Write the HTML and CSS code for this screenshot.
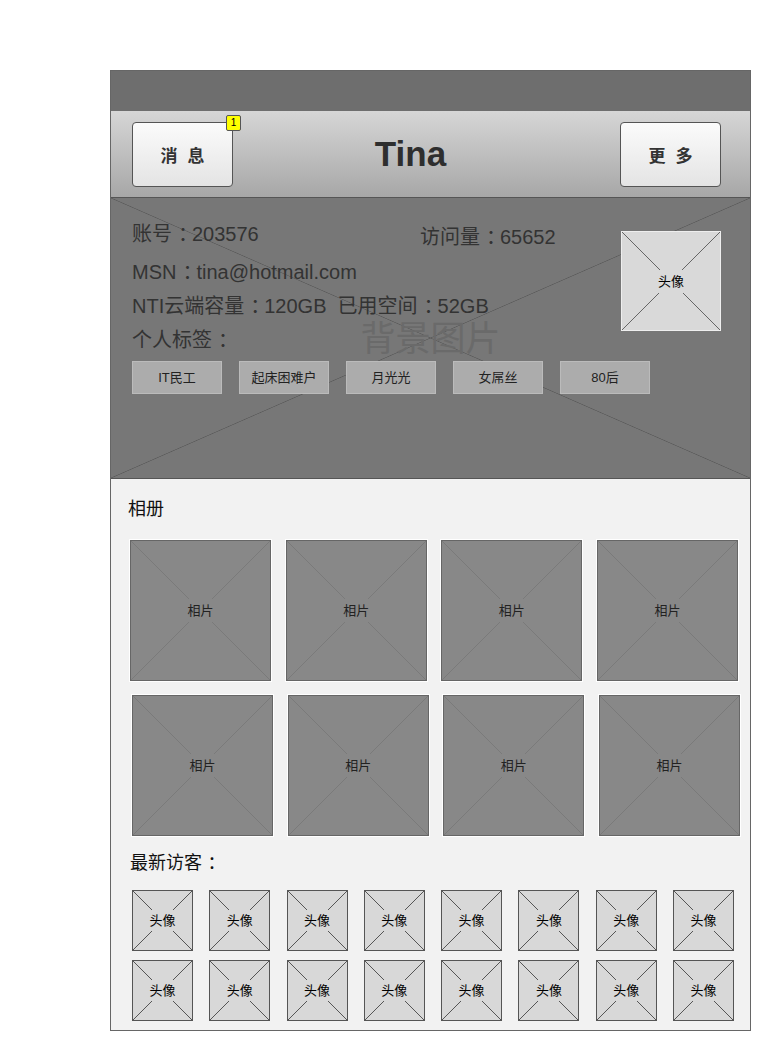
FILE: index.html
```html
<!DOCTYPE html>
<html lang="zh-CN">
<head>
  <meta charset="UTF-8">
  <title>个人主页 - Tina</title>
  <link rel="stylesheet" href="styles.css">
</head>
<body>
  <div class="phone">
    <div class="statusbar"></div>

    <div class="header">
      <button class="hbtn">消息<span class="badge">1</span></button>
      <div class="title">Tina</div>
      <button class="hbtn">更多</button>
    </div>

    <div class="info xbox">
      <div class="watermark">背景图片</div>
      <div class="info-main">
        <div class="info-text">
          <div class="row first">
            <span class="acc">账号<i class="colon">：</i>203576</span>
            <span class="visits">访问量<i class="colon">：</i>65652</span>
          </div>
          <div class="row">MSN<i class="colon">：</i>tina@hotmail.com</div>
          <div class="row">NTI云端容量<i class="colon">：</i>120GB&nbsp; 已用空间<i class="colon">：</i>52GB</div>
          <div class="row">个人标签<i class="colon">：</i></div>
        </div>
        <div class="avatar xbox"><span>头像</span></div>
      </div>
      <div class="tags">
        <span class="tag">IT民工</span>
        <span class="tag">起床困难户</span>
        <span class="tag">月光光</span>
        <span class="tag">女屌丝</span>
        <span class="tag">80后</span>
      </div>
    </div>

    <div class="content">
      <div class="sec-title album-title">相册</div>
      <div class="photos">
        <div class="photo xbox"><span>相片</span></div>
        <div class="photo xbox"><span>相片</span></div>
        <div class="photo xbox"><span>相片</span></div>
        <div class="photo xbox"><span>相片</span></div>
      </div>
      <div class="photos second">
        <div class="photo xbox"><span>相片</span></div>
        <div class="photo xbox"><span>相片</span></div>
        <div class="photo xbox"><span>相片</span></div>
        <div class="photo xbox"><span>相片</span></div>
      </div>

      <div class="sec-title">最新访客<i class="colon">：</i></div>
      <div class="visitors">
        <div class="visitor xbox"><span>头像</span></div>
        <div class="visitor xbox"><span>头像</span></div>
        <div class="visitor xbox"><span>头像</span></div>
        <div class="visitor xbox"><span>头像</span></div>
        <div class="visitor xbox"><span>头像</span></div>
        <div class="visitor xbox"><span>头像</span></div>
        <div class="visitor xbox"><span>头像</span></div>
        <div class="visitor xbox"><span>头像</span></div>
      </div>
      <div class="visitors">
        <div class="visitor xbox"><span>头像</span></div>
        <div class="visitor xbox"><span>头像</span></div>
        <div class="visitor xbox"><span>头像</span></div>
        <div class="visitor xbox"><span>头像</span></div>
        <div class="visitor xbox"><span>头像</span></div>
        <div class="visitor xbox"><span>头像</span></div>
        <div class="visitor xbox"><span>头像</span></div>
        <div class="visitor xbox"><span>头像</span></div>
      </div>
    </div>
  </div>
</body>
</html>
```

FILE: styles.css
```css
body { margin:0; background:#fff; font-family:"Liberation Sans", "Noto Sans CJK SC", sans-serif; color:#333; }
.phone { margin:70px 0 0 110px; width:639px; border:1px solid #666; background:#f2f2f2; }
/* full-width colon: same 1em advance, glyph moved toward the middle */
.colon { font-style:normal; margin-left:.3em; letter-spacing:-.3em; }

/* placeholder boxes: two diagonals drawn over the fill colour */
.xbox { --bg:#888; --ln:#777;
  background:
    linear-gradient(to top right, transparent calc(50% - 0.7px), var(--ln) 50%, transparent calc(50% + 0.7px)),
    linear-gradient(to bottom right, transparent calc(50% - 0.7px), var(--ln) 50%, transparent calc(50% + 0.7px)),
    var(--bg);
  box-sizing:border-box; display:flex; align-items:center; justify-content:center; }
.xbox > span { background:var(--bg); padding:4px 3px; font-size:13px; line-height:15px; }

.statusbar { height:40px; background:#6e6e6e; }

.header { height:86px; border-bottom:1px solid #555; background:linear-gradient(#d6d6d6, #a7a7a7); display:flex; align-items:center; padding:0 29px 0 21px; }
.hbtn { position:relative; width:101px; height:65px; border:1px solid #555; border-radius:4px; background:linear-gradient(#fbfbfb, #e4e4e4); font-family:inherit; font-size:17px; font-weight:bold; color:#333; padding:0 0 0 10px; letter-spacing:10px; margin-top:1px; }
.badge { position:absolute; top:-8px; right:-9px; width:13px; height:14px; border:1px solid #555; border-radius:2px; background:#ff0; font-size:10px; font-weight:normal; line-height:14px; letter-spacing:0; color:#000; }
.title { flex:1; text-align:center; font-size:35px; font-weight:bold; color:#2e2e2e; padding-right:32px; }

.info { --bg:#777; --ln:#5c5c5c; position:relative; display:block; height:281px; border-bottom:1px solid #555; padding:18px 29px 0 21px; }
.watermark { position:absolute; left:0; right:0; top:0; bottom:0; display:flex; align-items:center; justify-content:center; font-size:35px; color:#6a6a6a; padding-bottom:6px; }
.info-main { position:relative; display:flex; }
.info-text { flex:1; font-size:20px; line-height:34px; color:#333; }
.row.first { display:flex; line-height:36px; }
.acc { width:288px; }
.visits { padding-top:3px; }
.avatar { --bg:#d9d9d9; --ln:#666; width:100px; height:100px; border:1px solid #eee; margin-top:15px; }
.avatar > span { color:#000; }
.tags { position:relative; display:flex; gap:17px; margin-top:4px; }
.tag { width:90px; height:33px; box-sizing:border-box; border:1px solid #bbb; background:#acacac; font-size:13px; line-height:31px; text-align:center; color:#222; }

.content { padding:18px 0 9px 19px; }
.sec-title { font-size:18px; line-height:24px; color:#111; }
.album-title { margin-left:-2px; }
.photos { width:608px; display:flex; justify-content:space-between; margin-top:19px; }
.photos.second { margin:14px 0 15px 2px; }
.photo { --bg:#888; --ln:#7a7a7a; width:141px; height:141px; border:1px solid #666; box-shadow:0 0 0 1px #fff; }
.photo > span { color:#222; }
.visitors { width:602px; display:flex; justify-content:space-between; margin:15px 0 0 2px; }
.visitors + .visitors { margin-top:9px; }
.visitor { --bg:#d8d8d8; --ln:#555; width:61px; height:61px; border:1px solid #555; }
.visitor > span { color:#000; padding:3px 1px; }
```
